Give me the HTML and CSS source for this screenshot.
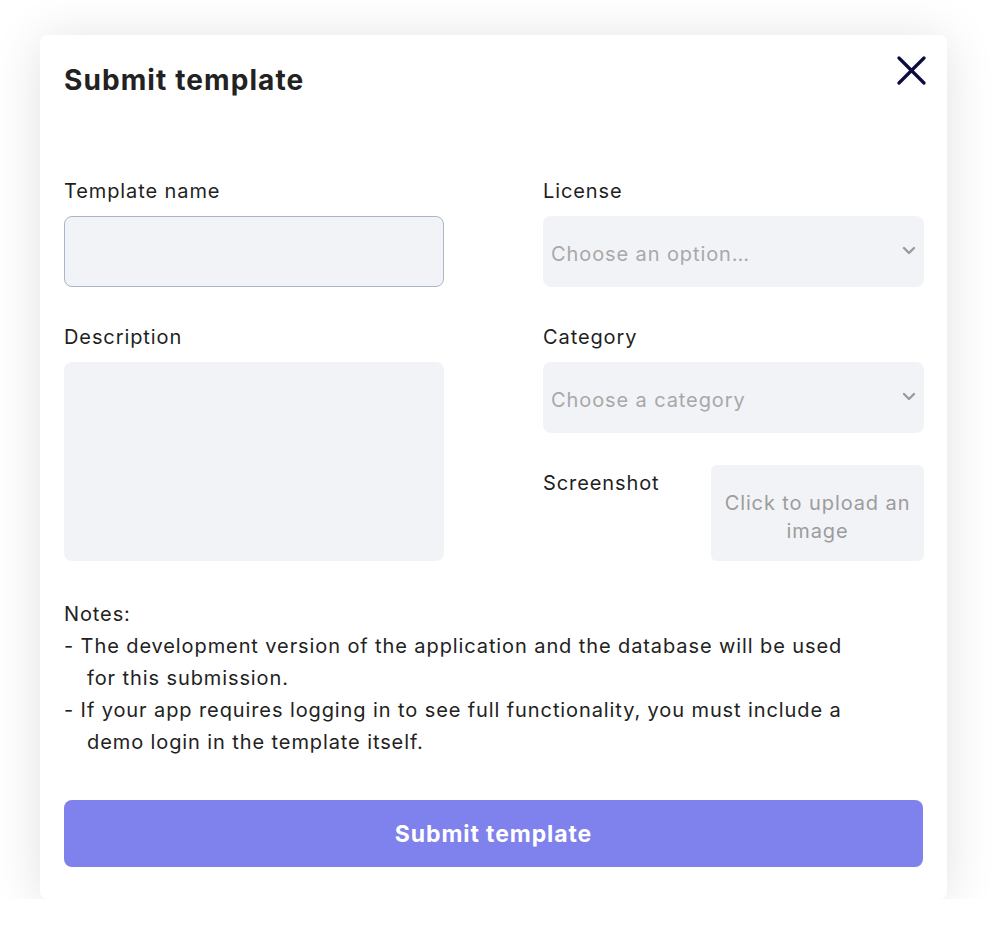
FILE: index.html
```html
<!DOCTYPE html>
<html>
<head>
    <title>Submit template</title>
    <link rel="stylesheet" href="styles.css">
</head>
<body>
    <div class="modal">
        <div class="modal-header">
            <h2 class="modal-title">Submit template</h2>
            <button class="close-btn" aria-label="Close">
                <svg width="30" height="30" viewBox="0 0 30 30">
                    <path d="M3 3 L28 28 M28 3 L3 28" stroke="#0b0c3e" stroke-width="3.2" stroke-linecap="round"/>
                </svg>
            </button>
        </div>

        <div class="form-grid">
            <div class="field">
                <label class="label" for="name">Template name</label>
                <input class="input input-focus" type="text" id="name">
            </div>
            <div class="field">
                <label class="label" for="license">License</label>
                <div class="select-wrap">
                    <select class="input select" id="license">
                        <option selected disabled>Choose an option…</option>
                    </select>
                    <svg class="chevron" width="14" height="9" viewBox="0 0 14 9">
                        <path d="M2 2 L7 7 L12 2" fill="none" stroke="#9a9a9a" stroke-width="2.4" stroke-linecap="round" stroke-linejoin="round"/>
                    </svg>
                </div>
            </div>
            <div class="field field-gap">
                <label class="label" for="description">Description</label>
                <textarea class="input textarea" id="description"></textarea>
            </div>
            <div class="field field-gap">
                <label class="label" for="category">Category</label>
                <div class="select-wrap">
                    <select class="input select" id="category">
                        <option selected disabled>Choose a category</option>
                    </select>
                    <svg class="chevron" width="14" height="9" viewBox="0 0 14 9">
                        <path d="M2 2 L7 7 L12 2" fill="none" stroke="#9a9a9a" stroke-width="2.4" stroke-linecap="round" stroke-linejoin="round"/>
                    </svg>
                </div>
                <div class="upload-row">
                    <span class="label">Screenshot</span>
                    <div class="upload">Click to upload an image</div>
                </div>
            </div>
        </div>

        <div class="notes">
            <p>Notes:</p>
            <p class="note">- The development version of the application and the database will be used for this submission.</p>
            <p class="note">- If your app requires logging in to see full functionality, you must include a demo login in the template itself.</p>
        </div>

        <button class="submit-btn">Submit template</button>
    </div>
</body>
</html>
```

FILE: styles.css
```css
body { margin: 0; background: #fff; font-family: Inter, "Noto Sans", sans-serif; color: #1f1f1f; letter-spacing: 0.9px; }
.modal { box-sizing: border-box; width: 907px; height: 864px; margin: 35px 0 0 40px; padding: 20px 21px 32px 24px; background: #fff; border-radius: 7px; box-shadow: 0 4px 50px rgba(0, 0, 0, 0.12); }
.modal-header { display: flex; justify-content: space-between; align-items: flex-start; }
.modal-title { margin: 8px 0 0; font-size: 28px; line-height: 34px; font-weight: 700; color: #222; letter-spacing: 1.1px; }
.close-btn { padding: 0; border: none; background: none; width: 30px; height: 30px; cursor: pointer; }
.close-btn svg { display: block; }

.form-grid { display: grid; grid-template-columns: 380px 381px; column-gap: 99px; margin-top: 82px; margin-right: 3px; }
.field { display: flex; flex-direction: column; }
.field-gap { margin-top: 38px; }
.label { font-size: 20px; line-height: 24px; margin-bottom: 13px; color: #1f1f1f; }
.input { box-sizing: border-box; width: 100%; height: 71px; border: none; border-radius: 8px; background: #f2f3f7; font-family: inherit; font-size: 20px; letter-spacing: 0.9px; padding: 4px 8px 0; }
.input-focus { border: 1.5px solid #a9b5c9; outline: none; }
.textarea { height: 199px; resize: none; }
.select-wrap { position: relative; }
.select { appearance: none; -webkit-appearance: none; color: #a8a8a8; }
.chevron { position: absolute; right: 8px; top: 30px; pointer-events: none; }

.upload-row { display: flex; justify-content: space-between; margin-top: 32px; }
.upload-row .label { margin-top: 6px; }
.upload { box-sizing: border-box; width: 213px; height: 96px; border-radius: 6px; background: #f2f3f7; color: #9c9c9c; font-size: 20px; line-height: 28px; text-align: center; padding: 24px 4px 0; }

.notes { margin-top: 37px; font-size: 20px; line-height: 32px; color: #222; }
.notes p { margin: 0; }
.note { max-width: 770px; padding-left: 23px; text-indent: -23px; }

.submit-btn { display: block; width: 859px; height: 67px; margin-top: 42px; border: none; border-radius: 8px; background: #7f81ec; color: #fff; font-family: inherit; font-size: 23px; font-weight: 700; letter-spacing: 0.9px; cursor: pointer; }
```
